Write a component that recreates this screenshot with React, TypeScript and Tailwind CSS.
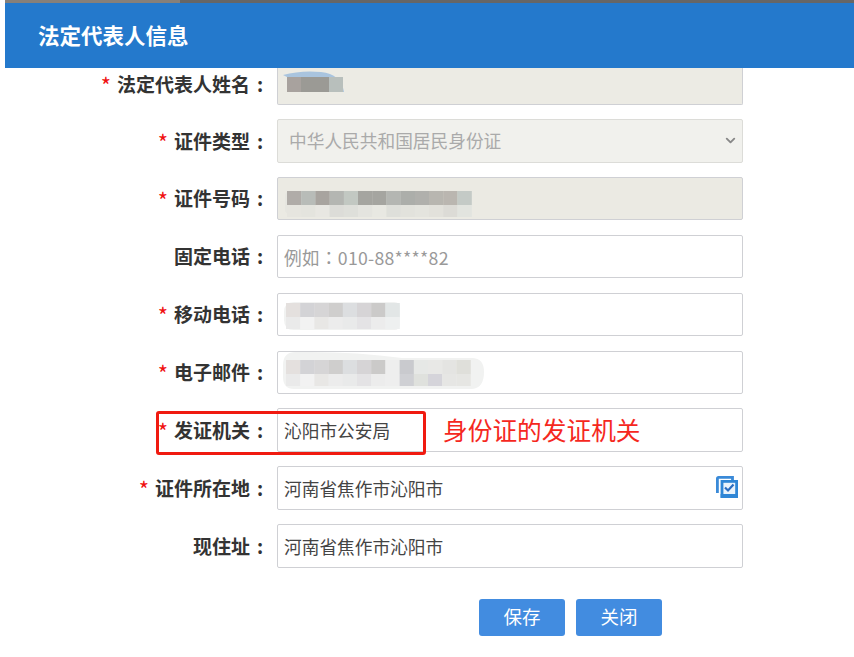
import { ChevronDown } from 'lucide-react';

const font = "font-['Microsoft_YaHei','Noto_Sans_CJK_SC','Noto_Sans',sans-serif]";

type Blur = {
  w: number;
  h: number;
  blob: string;
  blobFill?: string;
  top: string[];
  bottom: string[];
  className: string;
};

// pixelated bits over the private values
const Mosaic = ({ w, h, blob, blobFill = '#f1f2f1', top, bottom, className }: Blur) => (
  <svg width={w} height={h} className={`absolute left-[5px] blur-[0.6px] ${className}`}>
    <path d={blob} fill={blobFill} />
    {top.map((c, i) => (
      <rect key={i} x={4 + i * 14.2} y={9} width={14.4} height={14.2} fill={c} />
    ))}
    {bottom.map((c, i) => (
      <rect key={i} x={4 + i * 14.2} y={23} width={14.4} height={12} fill={c} />
    ))}
  </svg>
);

const Label = ({ text, required }: { text: string; required?: boolean }) => (
  <div className="flex w-[277px] shrink-0 items-center justify-end text-[19px] font-bold text-[#333]">
    {required && <span className="mr-[6px] text-[22px] leading-none font-normal text-[#f01010]">*</span>}
    {text}
    <span className="w-[27px] pl-[7px] text-left">:</span>
  </div>
);

const Field = ({
  label,
  required,
  value,
  placeholder,
  children,
}: {
  label: string;
  required?: boolean;
  value?: string;
  placeholder?: string;
  children?: React.ReactNode;
}) => (
  <div className="flex h-[43.5px] items-center">
    <Label text={label} required={required} />
    <div className="relative h-full w-[466px]">
      <input
        readOnly
        value={value ?? ''}
        placeholder={placeholder}
        className="h-full w-full rounded-[2px] border border-[#cfd0d4] bg-white px-[6px] text-[17.7px] text-[#444] outline-none placeholder:font-['Noto_Sans_CJK_TC'] placeholder:tracking-[0.25px] placeholder:text-[#999]"
      />
      {children}
    </div>
  </div>
);

const CheckIcon = () => (
  <svg width="22" height="22" viewBox="0 0 22 22" className="absolute right-[5px] top-[10px]">
    <path d="M1.4 17V2.5a1.1 1.1 0 0 1 1.1-1.1H16.5V4" fill="none" stroke="#3a8ad8" strokeWidth="2.8" />
    <rect x="6" y="5.4" width="14.6" height="15" fill="#eaf3fb" stroke="#2f86d6" strokeWidth="2.8" />
    <rect x="4.6" y="18" width="17.4" height="4" fill="#2f86d6" />
    <path d="M9 11.5l3 3 5.5-6" fill="none" stroke="#2a6cc0" strokeWidth="2.2" />
  </svg>
);

export default function App() {
  return (
    <div className={`relative h-[657px] w-[854px] overflow-hidden bg-white ${font}`}>
      <div className="ml-[5px] flex h-[3px]">
        <div className="w-[175px] bg-[#86807a]" />
        <div className="flex-1 bg-[#666]" />
      </div>
      <div className="ml-[5px] flex h-[65px] items-center bg-[#2479cc] pl-[33px] text-[21.5px] font-bold text-white">
        法定代表人信息
      </div>

      {/* first row is cut off by the header */}
      <div className="flex h-[37px] items-center">
        <div className="w-[277px] pb-[5px]">
          <Label text="法定代表人姓名" required />
        </div>
        <div className="relative h-full w-[466px] rounded-b-[2px] border border-t-0 border-[#cfd0d4] bg-[#ecebe4]">
          <svg width="66" height="26" className="absolute left-[3px] top-[3px] blur-[0.6px]">
            <path d="M2 4Q20 -1 40 1Q60 3 63 21H48V6H6Z" fill="#a9c4de" />
            <rect x="6" y="6" width="14.4" height="15" fill="#a8a29e" />
            <rect x="20" y="6" width="14.4" height="15" fill="#9b9a95" />
            <rect x="34" y="6" width="14.4" height="15" fill="#9b9a95" />
            <rect x="48" y="6" width="14" height="15" fill="#b8bfbc" />
          </svg>
        </div>
      </div>

      <div className="mt-[14px] flex flex-col gap-[14.4px]">
        <div className="flex h-[43.5px] items-center">
          <Label text="证件类型" required />
          <div className="flex h-full w-[466px] items-center justify-between rounded-[2px] border border-[#dcdcd8] bg-[#f1f1ed] pl-[11px] pr-[4px] text-[17.7px] text-[#aaa]">
            中华人民共和国居民身份证
            <ChevronDown size={15} strokeWidth={3} className="text-[#888]" />
          </div>
        </div>

        <div className="flex h-[43.5px] items-center">
          <Label text="证件号码" required />
          <div className="relative h-full w-[466px] rounded-[2px] border border-[#cfd0d4] bg-[#ebeae3]">
            <Mosaic
              className="top-[4px]"
              w={200}
              h={38}
              blob="M2 14Q2 9 8 9H188V32H8Q2 32 2 28Z"
              blobFill="#e6e6e0"
              top={['#b0aca8', '#b8bcb8', '#a8a49f', '#b4b6b2', '#c2c8c2', '#a5a5a0', '#a5a5a0', '#b4b6b2', '#acaeaa', '#b0b0ac', '#b8b6b0', '#bab6b0', '#c4cac6']}
              bottom={['#e6e5df', '#e4e4de', '#e8e7e2', '#dcdcd8', '#dedfda', '#e4e4df', '#e8e8e2', '#dedfda', '#e2e2dc', '#e4e4de', '#e2e1db', '#dcdbd6', '#e2e4df']}
            />
          </div>
        </div>

        <Field label="固定电话" placeholder="例如：010-88****82" />

        <Field label="移动电话" required>
          <Mosaic
            className="top-[1px]"
            w={125}
            h={40}
            blob="M2 18Q2 8 12 8H112Q118 8 118 14V30Q118 36 112 36H12Q2 36 2 26Z"
            top={['#e4e0de', '#d3d3d6', '#d6d5d6', '#cfcecd', '#dcdee0', '#d6d4d6', '#cbcac9', '#e2e6e6']}
            bottom={['#eaeaea', '#f2f2f2', '#e8e7e5', '#ececec', '#e9eaea', '#e4e3e5', '#ececec', '#eef0f0']}
          />
        </Field>

        <Field label="电子邮件" required>
          <Mosaic
            className="top-[0px]"
            w={210}
            h={40}
            blob="M1 14Q1 1 14 1Q70 0 120 7H190Q202 7 202 21Q202 37 190 38H12Q1 38 1 26Z"
            top={['#e4e0de', '#d3d3d6', '#d6d5d6', '#cfcecd', '#dcdee0', '#d6d4d6', '#cbcac9', '#eeeeee', '#c9cace', '#e6e8e6', '#e8e8e6', '#e4e4e2', '#dfdfda']}
            bottom={['#eaeaea', '#f2f2f2', '#e8e7e5', '#ececec', '#e9eaea', '#e4e3e5', '#ececec', '#eeeeee', '#cfd0d4', '#dfe1dd', '#d5d4da', '#e6e6e4', '#e6e6e3']}
          />
        </Field>

        <Field label="发证机关" required value="沁阳市公安局" />
        <Field label="证件所在地" required value="河南省焦作市沁阳市">
          <CheckIcon />
        </Field>
        <Field label="现住址" value="河南省焦作市沁阳市" />
      </div>

      <div className="mt-[31px] flex gap-[11px] pl-[479px]">
        <button className="h-[37px] w-[86px] rounded-[3px] bg-[#428ce0] text-[18.5px] text-white">保存</button>
        <button className="h-[37px] w-[86px] rounded-[3px] bg-[#428ce0] text-[18.5px] text-white">关闭</button>
      </div>

      {/* red annotation drawn on top of the form */}
      <div className="absolute left-[156px] top-[411px] h-[44px] w-[270px] rounded-[3px] border-[3px] border-[#f01a10]" />
      <div className="absolute left-[443px] top-[411px] text-[24.7px] leading-[36px] text-[#f5281e]">身份证的发证机关</div>
    </div>
  );
}
